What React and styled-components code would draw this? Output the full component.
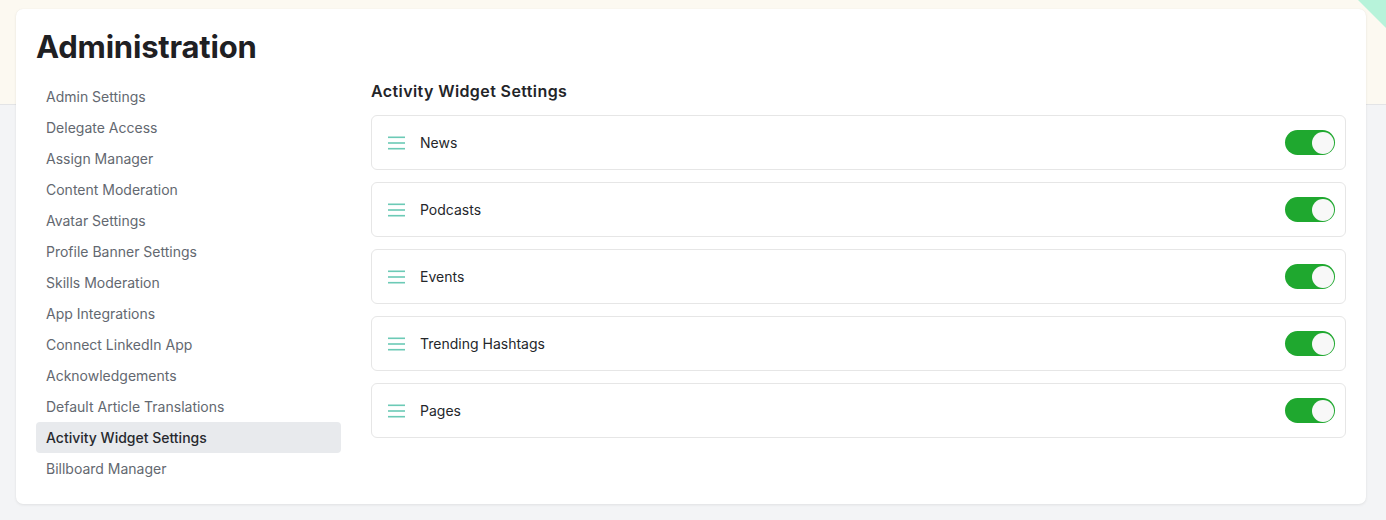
import React, { useState } from "react";
import styled, { createGlobalStyle } from "styled-components";

const GlobalStyle = createGlobalStyle`
  html, body {
    margin: 0;
    padding: 0;
  }
  body {
    font-family: Inter, "Noto Sans", "Liberation Sans", sans-serif;
    background:
      linear-gradient(to bottom, #fcf9f1 0, #fcf9f1 104px, #e3e4e6 104px, #e3e4e6 105px, #f3f4f6 105px) no-repeat;
    background-color: #f3f4f6;
    min-height: 520px;
  }
`;

const Page = styled.div`
  position: relative;
  padding: 9px 20px 16px 16px;
  min-height: 520px;
  box-sizing: border-box;
  overflow: hidden;
`;

const Corner = styled.div`
  position: absolute;
  top: 0;
  right: 0;
  width: 28px;
  height: 28px;
  background: #b7f3da;
  clip-path: polygon(0 0, 100% 0, 100% 100%);
`;

const Card = styled.div`
  background: #fff;
  border-radius: 7px;
  box-shadow: 0 1px 3px rgba(0, 0, 0, 0.08), 0 0 1px rgba(0, 0, 0, 0.06);
  padding: 20px 20px 26px 20px;
  height: 495px;
  box-sizing: border-box;
`;

const Title = styled.h1`
  margin: 0;
  font-size: 31px;
  line-height: 36px;
  font-weight: 700;
  color: #1f2023;
  letter-spacing: -0.2px;
`;

const Body = styled.div`
  display: flex;
  gap: 30px;
  margin-top: 16px;
`;

const Sidebar = styled.nav`
  width: 305px;
  display: flex;
  flex-direction: column;
  flex-shrink: 0;
`;

const NavItem = styled.div`
  height: 31px;
  line-height: 31px;
  padding: 0 10px;
  font-size: 14px;
  border-radius: 4px;
  color: ${(p) => (p.$active ? "#27292d" : "#636870")};
  font-weight: ${(p) => (p.$active ? 500 : 400)};
  background: ${(p) => (p.$active ? "#e8eaed" : "transparent")};
  cursor: pointer;
`;

const Main = styled.section`
  flex: 1;
  display: flex;
  flex-direction: column;
`;

const Heading = styled.h2`
  margin: 0;
  font-size: 16px;
  line-height: 20px;
  font-weight: 600;
  letter-spacing: 0.4px;
  color: #232428;
`;

const List = styled.div`
  display: flex;
  flex-direction: column;
  gap: 12px;
  margin-top: 14px;
`;

const Row = styled.div`
  height: 55px;
  box-sizing: border-box;
  border: 1px solid #e6e6e6;
  border-radius: 6px;
  display: flex;
  align-items: center;
  padding: 0 10px 0 16px;
`;

const Handle = styled.svg`
  width: 17px;
  height: 14px;
  margin-right: 15px;
  flex-shrink: 0;
  cursor: grab;
`;

const Label = styled.span`
  flex: 1;
  font-size: 14px;
  color: #25272b;
`;

const Switch = styled.button`
  width: 50px;
  height: 25px;
  border: none;
  padding: 0;
  border-radius: 13px;
  background: ${(p) => (p.$on ? "#1fa82f" : "#cfd2d6")};
  position: relative;
  cursor: pointer;
`;

const Knob = styled.span`
  position: absolute;
  top: 1.5px;
  left: ${(p) => (p.$on ? "26.5px" : "1.5px")};
  width: 22px;
  height: 22px;
  border-radius: 50%;
  background: #f8f8f8;
  transition: left 0.15s;
`;

const navItems = [
  "Admin Settings",
  "Delegate Access",
  "Assign Manager",
  "Content Moderation",
  "Avatar Settings",
  "Profile Banner Settings",
  "Skills Moderation",
  "App Integrations",
  "Connect LinkedIn App",
  "Acknowledgements",
  "Default Article Translations",
  "Activity Widget Settings",
  "Billboard Manager",
];

const widgets = ["News", "Podcasts", "Events", "Trending Hashtags", "Pages"];

function DragHandle() {
  return (
    <Handle viewBox="0 0 17 14">
      <rect x="0" y="0.5" width="17" height="1.6" fill="#6ccab6" />
      <rect x="0" y="6.2" width="17" height="1.6" fill="#6ccab6" />
      <rect x="0" y="11.9" width="17" height="1.6" fill="#6ccab6" />
    </Handle>
  );
}

export default function App() {
  const [enabled, setEnabled] = useState(widgets.map(() => true));

  const toggle = (i) =>
    setEnabled((prev) => prev.map((v, j) => (j === i ? !v : v)));

  return (
    <>
      <GlobalStyle />
      <Page>
        <Corner />
        <Card>
          <Title>Administration</Title>
          <Body>
            <Sidebar>
              {navItems.map((item) => (
                <NavItem key={item} $active={item === "Activity Widget Settings"}>
                  {item}
                </NavItem>
              ))}
            </Sidebar>
            <Main>
              <Heading>Activity Widget Settings</Heading>
              <List>
                {widgets.map((w, i) => (
                  <Row key={w}>
                    <DragHandle />
                    <Label>{w}</Label>
                    <Switch $on={enabled[i]} onClick={() => toggle(i)}>
                      <Knob $on={enabled[i]} />
                    </Switch>
                  </Row>
                ))}
              </List>
            </Main>
          </Body>
        </Card>
      </Page>
    </>
  );
}
